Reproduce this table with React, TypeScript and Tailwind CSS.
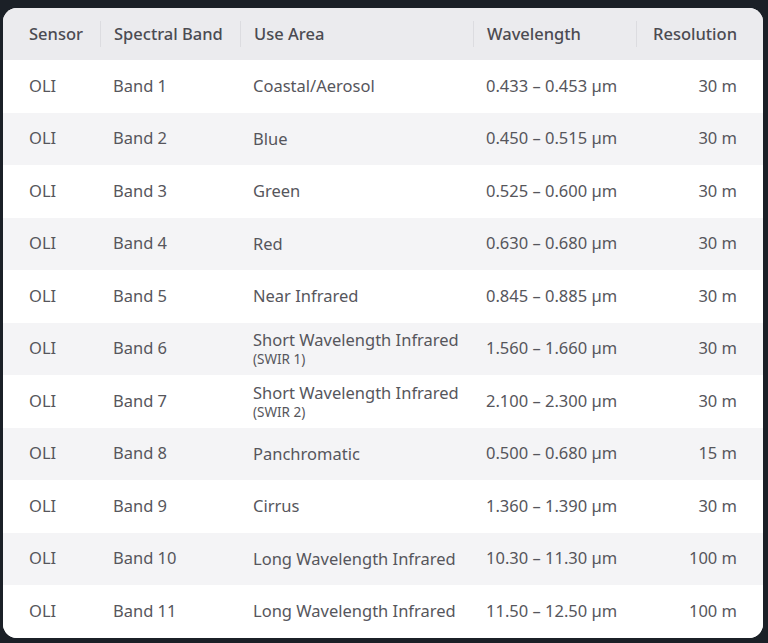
import React from "react";

type Row = { band: string; use: string; sub?: string; wl: string; res: string };

const rows: Row[] = [
  { band: "Band 1", use: "Coastal/Aerosol", wl: "0.433 – 0.453 µm", res: "30 m" },
  { band: "Band 2", use: "Blue", wl: "0.450 – 0.515 µm", res: "30 m" },
  { band: "Band 3", use: "Green", wl: "0.525 – 0.600 µm", res: "30 m" },
  { band: "Band 4", use: "Red", wl: "0.630 – 0.680 µm", res: "30 m" },
  { band: "Band 5", use: "Near Infrared", wl: "0.845 – 0.885 µm", res: "30 m" },
  { band: "Band 6", use: "Short Wavelength Infrared", sub: "(SWIR 1)", wl: "1.560 – 1.660 µm", res: "30 m" },
  { band: "Band 7", use: "Short Wavelength Infrared", sub: "(SWIR 2)", wl: "2.100 – 2.300 µm", res: "30 m" },
  { band: "Band 8", use: "Panchromatic", wl: "0.500 – 0.680 µm", res: "15 m" },
  { band: "Band 9", use: "Cirrus", wl: "1.360 – 1.390 µm", res: "30 m" },
  { band: "Band 10", use: "Long Wavelength Infrared", wl: "10.30 – 11.30 µm", res: "100 m" },
  { band: "Band 11", use: "Long Wavelength Infrared", wl: "11.50 – 12.50 µm", res: "100 m" },
];

const grid = "grid grid-cols-[84px_140px_233px_163px_114px] px-[13px]";

export default function App() {
  return (
    <div
      className="min-h-screen bg-[#1b2027] pt-[8px] pl-[3px]"
      style={{ fontFamily: '"Noto Sans", "Open Sans", sans-serif' }}
    >
      <div className="w-[760px] rounded-[14px] overflow-hidden bg-white">
        <div className={`${grid} h-[52px] items-center bg-[#ebebee] text-[16.5px] font-medium text-[#4b4b52]`}>
          <div className="px-[13px] h-[26px] flex items-center">Sensor</div>
          <div className="px-[13px] h-[26px] flex items-center border-l border-[#dcdce0]">Spectral Band</div>
          <div className="px-[13px] h-[26px] flex items-center border-l border-[#dcdce0]">Use Area</div>
          <div className="px-[13px] h-[26px] flex items-center border-l border-[#dcdce0]">Wavelength</div>
          <div className="px-[13px] h-[26px] flex items-center justify-end border-l border-[#dcdce0]">Resolution</div>
        </div>
        {rows.map((r, i) => (
          <div
            key={r.band}
            className={`${grid} h-[52.5px] items-center text-[16.5px] text-[#56565c] ${i % 2 === 0 ? "bg-white" : "bg-[#f4f4f6]"}`}
          >
            <div className="px-[13px]">OLI</div>
            <div className="px-[13px]">{r.band}</div>
            <div className="px-[13px] flex flex-col">
              <span className="leading-[22px]">{r.use}</span>
              {r.sub && <span className="text-[13.5px] leading-[17px]">{r.sub}</span>}
            </div>
            <div className="px-[13px]">{r.wl}</div>
            <div className="px-[13px] text-right">{r.res}</div>
          </div>
        ))}
      </div>
    </div>
  );
}
